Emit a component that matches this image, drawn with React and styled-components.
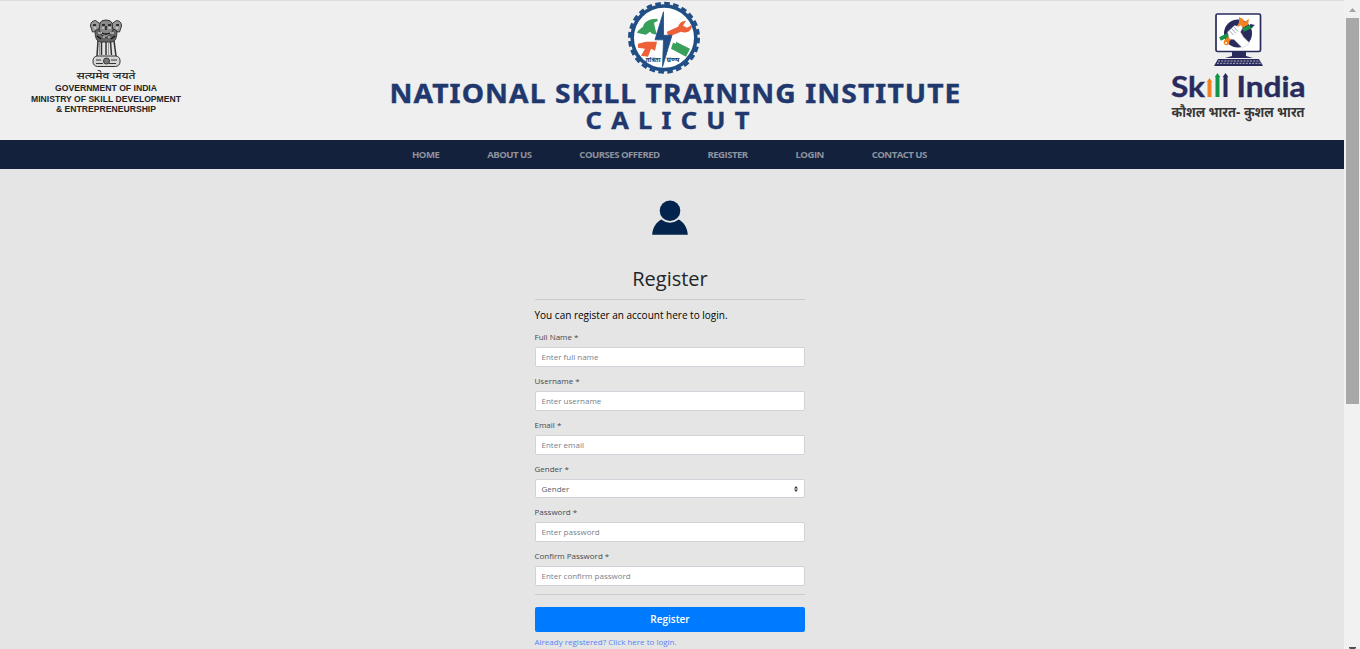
import React from 'react';
import styled, { createGlobalStyle } from 'styled-components';

const Global = createGlobalStyle`
  *, *::before, *::after { box-sizing: border-box; }
  html, body { margin: 0; overflow: hidden; }
  body { font-family: "Open Sans", "Noto Sans", sans-serif; background: #e5e5e5; color: #212529; }
`;

const Window = styled.div`
  display: flex;
  width: 1360px;
  height: 649px;
  overflow: hidden;
`;
const Page = styled.div`
  flex: 1;
  min-width: 0;
`;
const Header = styled.header`
  display: flex;
  justify-content: space-between;
  height: 140px;
  background: #efefef;
  border-top: 1px solid #dcdcdf;
`;
const Brand = styled.div`
  width: 240px;
  svg { display: block; }
`;
const Center = styled.div`
  display: flex;
  flex-direction: column;
  align-items: center;
  padding-left: 8px;
  color: #21386e;
  font-family: "Noto Sans", Verdana, sans-serif;
  font-weight: 700;
  white-space: nowrap;
  -webkit-text-stroke: 0.4px #21386e;
  svg { display: block; margin-left: -23px; -webkit-text-stroke: 0; }
`;
const Title = styled.div`
  font-size: 26px;
  line-height: 28px;
  margin-top: 3.5px;
  letter-spacing: 1px;
  transform: scaleX(1.085);
`;
const City = styled.div`
  margin-right: 8px;
  font-size: 23.5px;
  line-height: 27px;
  letter-spacing: 8.6px;
  transform: scaleX(1.08);
`;
const Nav = styled.nav`
  display: flex;
  gap: 47.8px;
  height: 29px;
  padding-left: 412px;
  align-items: center;
  background: #14213d;
`;
const NavLink = styled.a`
  font-size: 9.6px;
  font-weight: 700;
  letter-spacing: -0.52px;
  line-height: 14px;
  color: #8d939e;
  white-space: nowrap;
`;
const Form = styled.form`
  width: 270px;
  margin: 0 0 0 535px;
  padding-top: 31px;
`;
const UserIcon = styled.svg`
  display: block;
  margin: 0 auto;
`;
const Heading = styled.h1`
  margin: 31px 0 0;
  height: 32px;
  font-size: 20px;
  line-height: 24px;
  font-weight: 400;
  text-align: center;
`;
const Rule = styled.hr`
  margin: 0;
  border: 0;
  height: 1px;
  background: #cbcccd;
`;
const Intro = styled.p`
  margin: 8px 0 8px -0.5px;
  font-size: 10px;
  line-height: 15px;
  color: #000;
`;
const Field = styled.div`
  margin-bottom: 8px;
`;
const Label = styled.label`
  display: block;
  font-size: 8px;
  line-height: 11px;
  margin: 0 0 5px -0.5px;
  color: #444a50;
`;
const control = `
  display: flex;
  width: 100%;
  padding: 0 6px 0 5.5px;
  background: #fff;
  border: 1px solid #ced4da;
  border-radius: 2px;
  font: 400 8px/12px "Open Sans", sans-serif;
`;
const Input = styled.input`
  ${control}
  height: 20px;
  padding-bottom: 2px;
  outline: 0;
  &::placeholder { color: #78818a; opacity: 1; }
`;
const Select = styled.div`
  ${control}
  height: 19px;
  align-items: center;
  justify-content: space-between;
  color: #596068;
`;
const Submit = styled.button`
  display: block;
  width: 100%;
  height: 25px;
  margin: 12px 0 4px;
  padding: 0;
  border: 0;
  border-radius: 2px;
  background: #007bff;
  color: #fff;
  font: 600 10px/15px "Open Sans", sans-serif;
`;
const LoginLink = styled.a`
  display: block;
  margin-left: -0.5px;
  font-size: 8px;
  line-height: 11px;
  color: #5684fa;
`;
const Scrollbar = styled.aside`
  display: flex;
  flex-direction: column;
  align-items: center;
  width: 16px;
  background: #f1f1f1;
  svg { display: block; }
`;
const Thumb = styled.div`
  width: 13px;
  height: 386px;
  margin: 0 0 241px 1px;
  background: #a8a8a8;
`;

const GovernmentLogo = () => (
  <svg width="240" height="125" viewBox="0 1 240 125">
    <g fill="#bbb" stroke="#333" strokeWidth="1">
      <path d="M97 40 96 56h21l-2-16Z" fill="#e4e4e4" stroke="none" />
      <path d="M98 41l-1 15M101.500 42v13M106 39v16M110.500 42l1 13M114 41l2 15" strokeWidth="1.500" />
      <path d="M99.500 43v12M108.500 43v12" stroke="#999" />
      <rect x="93" y="56" width="27" height="10.500" rx="4.500" fill="#d5d5d5" />
      <circle cx="106.500" cy="61" r="3" fill="#777" />
      <path d="M96 60h5M111 60h6M96 63.500h7M109 63.500h7" />
      <path d="M90.500 26q0-5 5-5.500l5 3.500-1 7-7 1Z" fill="#999" />
      <path d="M121.500 26q0-5-5-5.500l-5 3.500 1 7 7 1Z" fill="#999" />
      <path d="M95 31q0 10 5 11h12q5-1 5-11l-5-3h-12Z" fill="#666" />
      <path d="M100 23q1-3 6-3t6 3l1 7-3 5-4 3-4-3-3-5Z" fill="#888" />
      <path d="M102 25h3M108 25h3M106 26v4M102 33q4 2 8 0M93 25h3M116 25h3M97 36l4 3M115 36l-4 3" stroke="#111" strokeWidth="1.300" />
      <path d="M102 28h2M108 28h3M98 33h4M110 33h4M94 28h2M116 28h2M103 37h2M108 37h2" stroke="#eee" />
    </g>
    <g fill="#242424" textAnchor="middle" fontFamily='"Liberation Sans", Arial, sans-serif' fontWeight="700">
      <text x="106" y="79" fontSize="10" fontWeight="500" fontFamily='"Noto Sans Devanagari", "Noto Sans", sans-serif' textLength="59" lengthAdjust="spacingAndGlyphs">सत्यमेव जयते</text>
      <text x="106" y="90.500" fontSize="8.600" textLength="102" lengthAdjust="spacingAndGlyphs">GOVERNMENT OF INDIA</text>
      <text x="106" y="101.500" fontSize="8.200" textLength="150" lengthAdjust="spacingAndGlyphs">MINISTRY OF SKILL DEVELOPMENT</text>
      <text x="106" y="112" fontSize="8.600" textLength="100" lengthAdjust="spacingAndGlyphs">&amp; ENTREPRENEURSHIP</text>
    </g>
  </svg>
);

const InstituteLogo = () => (
  <svg width="76" height="74" viewBox="0 0.2 76 74">
    <circle cx="38" cy="37" r="34.500" fill="none" stroke="#214f85" strokeWidth="3" strokeDasharray="5.600 3.430" />
    <circle cx="38" cy="37" r="31.800" fill="#fff" stroke="#214f85" strokeWidth="3.600" />
    <path d="M11 32c1-3 4-4 6-6 1-5 6-8 14-8l1 2-4 2 1 5 1 4 1 3-5-1-2-2-4 3-5-1Z" fill="#38a05a" />
    <path d="m41 31 11-5q2-6 8-6l-3 5 4 2 5-3c0 7-6 9-11 7l-10 4q-4 0-4-4Z" fill="#ed6038" />
    <path d="m12 43 8-2h11l-2 9-4-2-3 8-7-1 4-7-7-1Z" fill="#ed6038" />
    <path d="m50 41 14 7-4 8-15-8 2-6 3 1Z" fill="#38a05a" />
    <path d="M37.500 11 29 39h8.500l-1 27L46 34.500h-8.500Z" fill="#214f85" stroke="#214f85" strokeWidth=".8" />
    <g fill="#263a58" fontSize="7" fontWeight="700" fontFamily='"Noto Sans Devanagari", "Noto Sans", sans-serif'>
      <text x="19.500" y="61" textLength="15" lengthAdjust="spacingAndGlyphs">तांत्रता</text>
      <text x="40.500" y="61" textLength="13" lengthAdjust="spacingAndGlyphs">ग्रण्य</text>
    </g>
  </svg>
);

const SkillIndiaLogo = () => (
  <svg width="240" height="130" viewBox="1104 1 240 130">
    <rect x="1216" y="14" width="44.500" height="37.500" rx="1.500" fill="#fff" stroke="#292b5d" strokeWidth="1.700" />
    <path d="M1232 52h14v4l7 2h-28l7-2Z" fill="#292b5d" />
    <path d="M1218 59h41l4 7h-49Z" fill="#292b5d" />
    <path d="M1218 61h42M1217 63.300h44" stroke="#d8d8e5" strokeWidth=".8" strokeDasharray="2 1.200" />
    <circle cx="1238" cy="33.500" r="14" fill="#292b5d" />
    <path d="m1226 42 5-6M1238 28l5-6" stroke="#f58220" strokeWidth="4.500" />
    <path d="m1239 22 0-5 4 2 1 3 5-3-1 6-6 3-4-2Z" fill="#f58220" />
    <circle cx="1226.500" cy="42.500" r="2.800" fill="#f58220" /><circle cx="1226" cy="43" r="1" fill="#fff" />
    <path d="m1220 39 8-4M1243 30l9-4" stroke="#159447" strokeWidth="4" /><path d="m1250 24 5 1-4 3Z" fill="#292b5d" />
    <path d="m1227.500 32 7-6.500 4 1 2.500-1.500 1.500 3-2 4 3 5 6 6-7 5-8.500-8.500-4.500-.5Z" fill="#fff" stroke="#b5b8c6" strokeWidth=".4" />
    <path d="m1229.500 31 4 4m-2-6.500 4.500 5m-2-6.500 4 4.500" stroke="#7b7e9c" strokeWidth=".7" />
    <g fill="#292b5d" stroke="#292b5d" strokeWidth=".4" fontFamily='Lato, "Open Sans", sans-serif' fontWeight="700" fontSize="28">
      <text x="1171" y="97" textLength="34" lengthAdjust="spacingAndGlyphs">Sk</text>
      <text x="1236.500" y="97" textLength="69" lengthAdjust="spacingAndGlyphs">India</text>
    </g>
    <path d="M1207.500 97V82h-.8l2.800-4 2.800 4h-.8v15Z" fill="#f58220" />
    <path d="M1215.500 97V77h-.8l2.800-4 2.800 4h-.8v20Z" fill="#159447" />
    <path d="M1223.500 97V77h-.8l2.800-4 2.800 4h-.8v20Z" fill="#292b5d" />
    <text x="1171.500" y="116.500" fill="#363636" fontFamily='"Noto Sans Devanagari", "Noto Sans", sans-serif' fontSize="13.500" fontWeight="700" textLength="133" lengthAdjust="spacingAndGlyphs">कौशल भारत- कुशल भारत</text>
  </svg>
);

const TextField = ({ label, placeholder, type = 'text' }) => (
  <Field><Label>{label} *</Label><Input type={type} placeholder={placeholder} /></Field>
);

export default function App() {
  return (
    <>
      <Global />
      <Window>
        <Page>
          <Header>
            <Brand><GovernmentLogo /></Brand>
            <Center><InstituteLogo /><Title>NATIONAL SKILL TRAINING INSTITUTE</Title><City>CALICUT</City></Center>
            <Brand><SkillIndiaLogo /></Brand>
          </Header>
          <Nav>
            {['HOME', 'ABOUT US', 'COURSES OFFERED', 'REGISTER', 'LOGIN', 'CONTACT US'].map((t) => <NavLink key={t}>{t}</NavLink>)}
          </Nav>
          <Form>
            <UserIcon width="36" height="36" viewBox="0 0 36 36" fill="#03244d">
              <circle cx="18" cy="10.700" r="10.300" />
              <path d="M.2 34.800C.5 28 4 22.500 9.200 19.500q8.800 6.500 17.600 0C32 22.500 35.500 28 35.800 34.800Z" />
            </UserIcon>
            <Heading>Register</Heading>
            <Rule />
            <Intro>You can register an account here to login.</Intro>
            <TextField label="Full Name" placeholder="Enter full name" />
            <TextField label="Username" placeholder="Enter username" />
            <TextField label="Email" placeholder="Enter email" type="email" />
            <Field>
              <Label>Gender *</Label>
              <Select>Gender<svg width="4" height="6" viewBox="0 0 4 6" fill="#343a40"><path d="M2 0 4 2.500H0ZM2 6 0 3.500h4Z" /></svg></Select>
            </Field>
            <TextField label="Password" placeholder="Enter password" type="password" />
            <TextField label="Confirm Password" placeholder="Enter confirm password" type="password" />
            <Rule />
            <Submit type="button">Register</Submit>
            <LoginLink>Already registered? Click here to login.</LoginLink>
          </Form>
        </Page>
        <Scrollbar>
          <svg width="16" height="18" viewBox="0 0 16 18"><path d="m5 12 3.500-4 3.500 4Z" fill="#a3a3a3" /></svg>
          <Thumb />
          <svg width="16" height="4" viewBox="0 0 16 4"><path d="M5 2h7v1l-1 1H6L5 3Z" fill="#505050" /></svg>
        </Scrollbar>
      </Window>
    </>
  );
}
